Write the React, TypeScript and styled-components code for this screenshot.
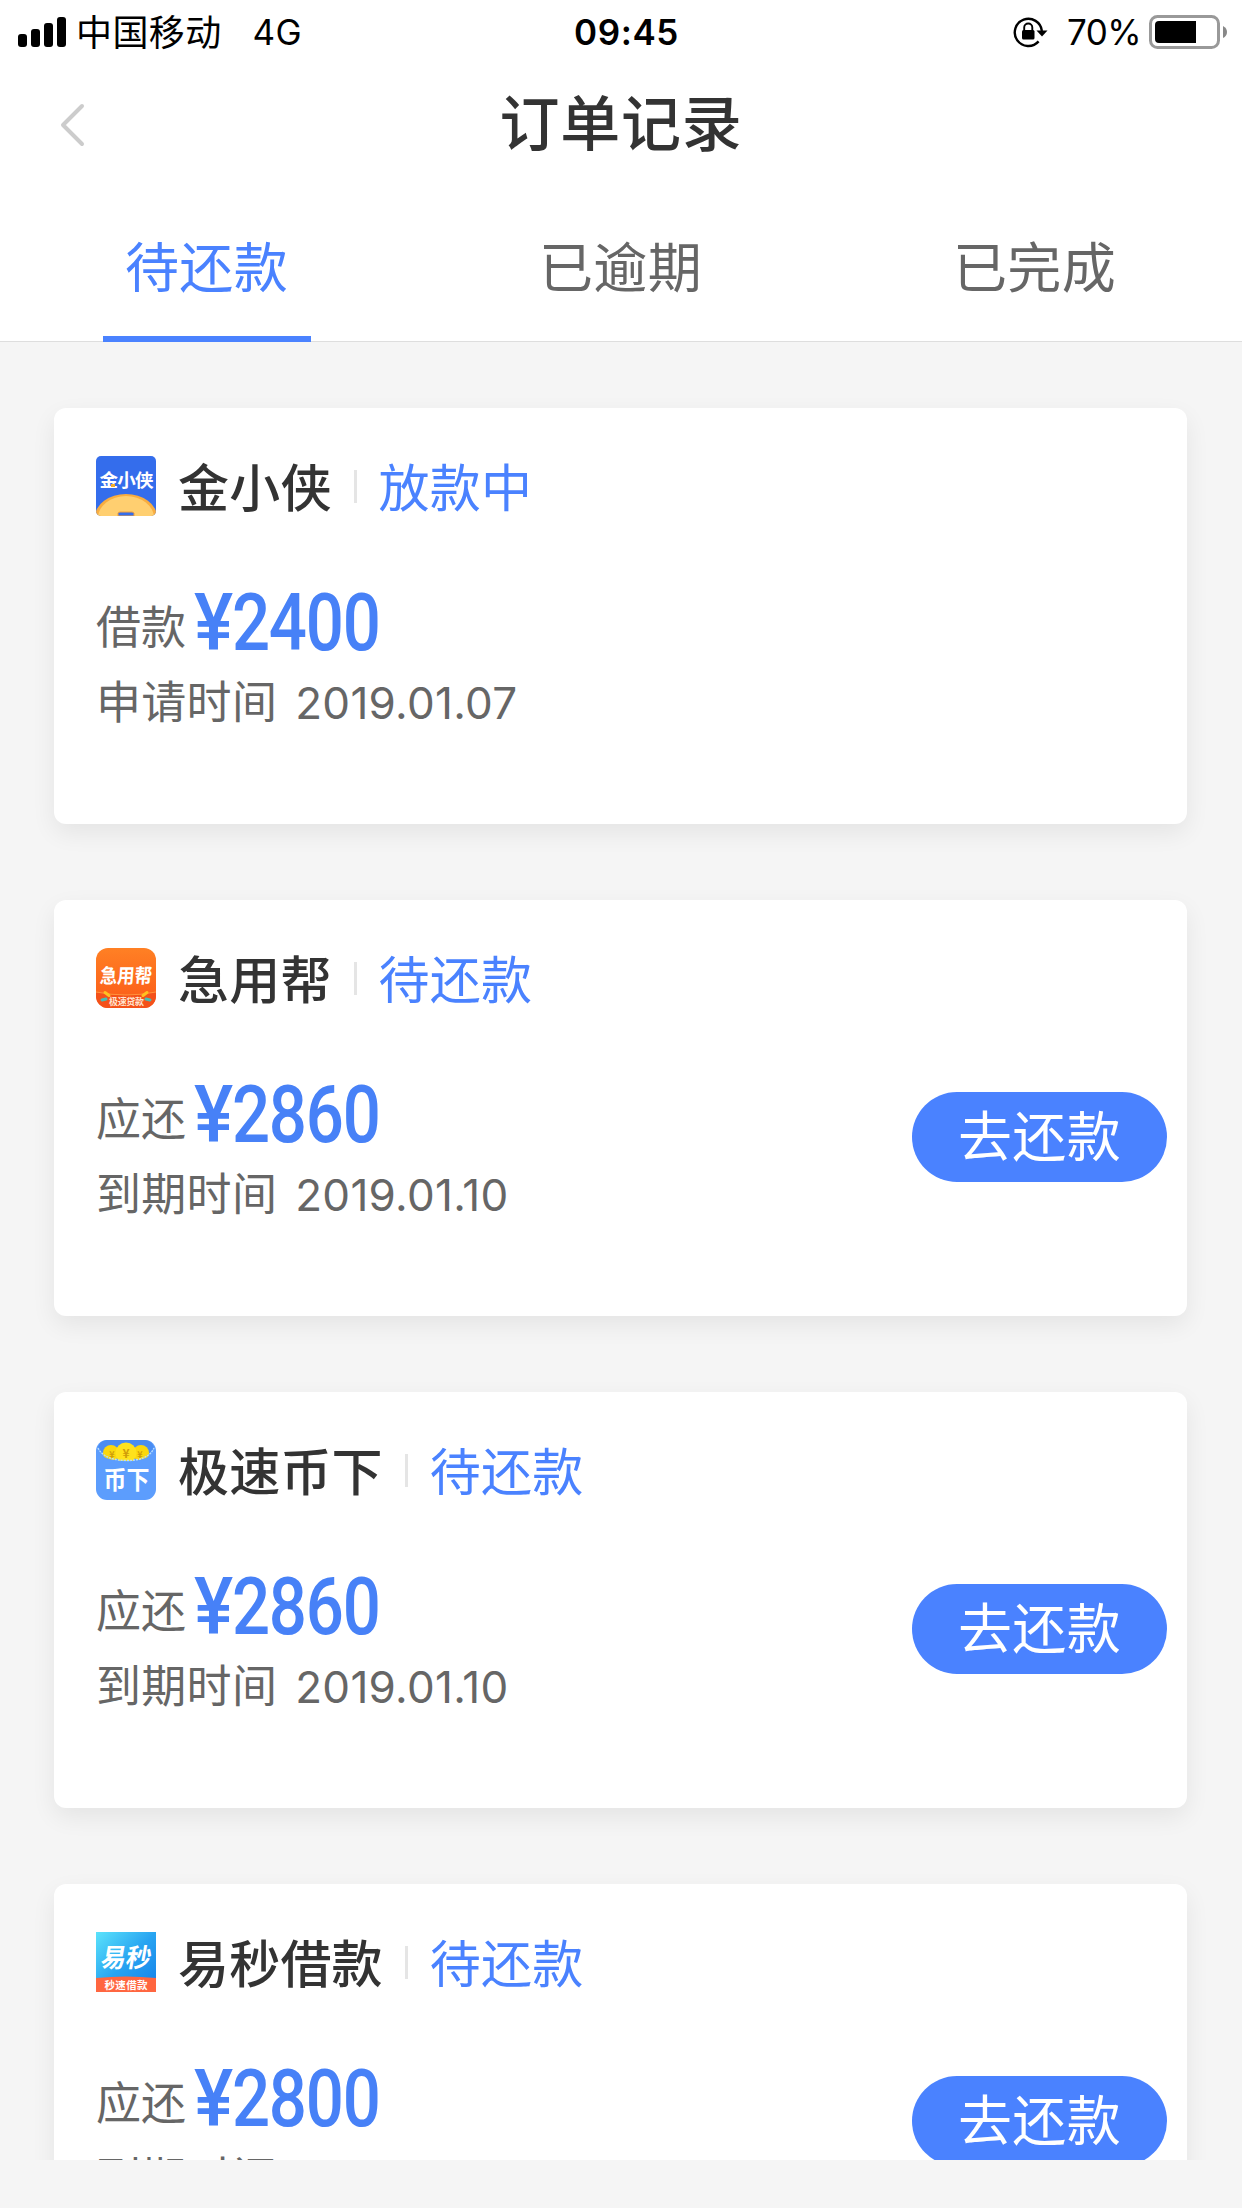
import React from 'react';
import styled, { createGlobalStyle } from 'styled-components';

const cjk = '"Noto Sans CJK SC", sans-serif';

const GlobalStyle = createGlobalStyle`
  * { box-sizing: border-box; }
  body { margin: 0; background: #f5f5f5; font-family: Inter, ${cjk}; }
`;

const Screen = styled.div`
  width: 1242px;
  height: 2208px;
  display: flex;
  flex-direction: column;
  background: #f5f5f5;
  overflow: hidden;
`;

const StatusBar = styled.header`
  height: 60px;
  flex: none;
  display: grid;
  grid-template-columns: 1fr auto 1fr;
  align-items: center;
  padding: 0 14px 0 18px;
  background: #fff;
  color: #000;
  font-size: 35px;
  line-height: 60px;
`;

const StatusLeft = styled.div`
  display: flex;
  align-items: center;
`;

const StatusRight = styled.div`
  display: flex;
  align-items: center;
  justify-content: flex-end;
`;

const Carrier = styled.span`
  margin-left: 10px;
  padding-bottom: 4px;
  font-family: ${cjk};
  font-size: 36px;
  letter-spacing: 0.4px;
`;

const Network = styled.span`
  margin-left: 31px;
  letter-spacing: 0.4px;
`;

const Clock = styled.time`
  padding-left: 7px;
  font-weight: 600;
  letter-spacing: 0.6px;
`;

const Percent = styled.span`
  margin: 0 8px 0 19px;
  letter-spacing: -0.6px;
`;

const NavBar = styled.nav`
  height: 132px;
  flex: none;
  display: grid;
  grid-template-columns: 150px 1fr 150px;
  align-items: start;
  background: #fff;
`;

const BackButton = styled.button`
  display: flex;
  align-items: center;
  height: 130px;
  padding: 0 0 0 58px;
  border: 0;
  background: none;
`;

const Title = styled.h1`
  margin: 0;
  color: #333;
  font: 500 60px/119px ${cjk};
  text-align: center;
  letter-spacing: 0.8px;
`;

const Tabs = styled.div`
  height: 150px;
  flex: none;
  display: flex;
  background: #fff;
  border-bottom: 1px solid #dedede;
`;

const Tab = styled.button<{ $active?: boolean }>`
  flex: 1;
  display: flex;
  flex-direction: column;
  align-items: center;
  justify-content: space-between;
  height: 150px;
  padding: 0;
  border: 0;
  background: none;
  color: ${(p) => (p.$active ? '#4a82ff' : '#666')};
  font: 400 54px/146px ${cjk};

  &::after {
    content: '';
    width: 208px;
    height: 6px;
    flex: none;
    background: ${(p) => (p.$active ? '#4a82ff' : 'transparent')};
  }
`;

const TabLabel = styled.span`
  height: 144px;
  padding-right: 1px;
  line-height: 145px;
  letter-spacing: 0.4px;
`;

const List = styled.main`
  height: 1818px;
  flex: none;
  display: flex;
  flex-direction: column;
  gap: 76px;
  padding: 66px 55px 0 54px;
  overflow: hidden;
`;

const Card = styled.article`
  height: 416px;
  flex: none;
  display: flex;
  flex-direction: column;
  padding: 48px 20px 0 42px;
  border-radius: 12px;
  background: #fff;
  box-shadow: 0 9px 24px rgba(0, 0, 0, 0.07);
`;

const CardHead = styled.div`
  height: 60px;
  display: flex;
  align-items: center;
`;

const Name = styled.h2`
  margin: 0 0 0 22px;
  padding-bottom: 3px;
  color: #333;
  font: 500 51px/56px ${cjk};
  letter-spacing: 0.2px;
`;

const Divider = styled.span`
  width: 3px;
  height: 33px;
  margin: 0 22px 0 22px;
  background: #e5e5e5;
`;

const State = styled.span`
  padding-bottom: 3px;
  color: #4a82ff;
  font: 400 51px/56px ${cjk};
  letter-spacing: 0.2px;
`;

const CardBody = styled.div`
  display: flex;
  justify-content: space-between;
  align-items: flex-start;
  padding-top: 66px;
`;

const Facts = styled.div`
  display: flex;
  flex-direction: column;
`;

const AmountRow = styled.div`
  display: flex;
  align-items: flex-start;
  height: 84px;
`;

const AmountLabel = styled.span`
  color: #666;
  font: 400 45px/86px ${cjk};
`;

const Amount = styled.strong`
  display: flex;
  margin-left: 8px;
  color: #4781f7;
  font: 500 79px/82px Roboto, sans-serif;
  letter-spacing: -1.4px;
  transform: scaleX(0.85);
  transform-origin: 0 50%;
`;

const Currency = styled.span`
  margin-right: 4px;
  transform: scaleX(1.1);
  transform-origin: 0 50%;
`;

const DateRow = styled.div`
  display: flex;
  align-items: baseline;
  height: 60px;
  margin-top: 4px;
  color: #666;
  font: 400 45px/59px ${cjk};
  letter-spacing: 0.3px;
`;

const DateValue = styled.time`
  margin-left: 18px;
  font-family: Inter, sans-serif;
  font-size: 44px;
  letter-spacing: 0.3px;
`;

const PayButton = styled.button`
  width: 255px;
  height: 90px;
  margin-top: 18px;
  padding: 0 0 6px;
  border: 0;
  border-radius: 45px;
  background: #4a82ff;
  color: #fff;
  font: 400 54px/84px ${cjk};
  letter-spacing: 0.4px;
`;

const Logo = styled.svg`
  width: 60px;
  height: 60px;
  flex: none;
  font-family: ${cjk};
  font-weight: 900;
`;

const SignalIcon = () => (
  <svg width="48" height="30" viewBox="0 0 48 30">
    <rect x="0" y="17" width="9" height="13" rx="3" />
    <rect x="13" y="12" width="9" height="18" rx="3" />
    <rect x="26" y="6" width="9" height="24" rx="3" />
    <rect x="39" y="0" width="9" height="30" rx="3" />
  </svg>
);

const LockIcon = () => (
  <svg width="35" height="32" viewBox="0 0 35 32" fill="none" stroke="#000">
    <path d="M25.6 25.4A13.6 13.6 0 1 1 28.9 15" strokeWidth="2.4" />
    <path d="M23.5 14.5H34.5L29 20.5Z" fill="#000" stroke="none" />
    <rect x="9" y="14" width="12.5" height="9.5" rx="1.5" fill="#000" stroke="none" />
    <path d="M11.2 15V11.5a4.05 4.05 0 0 1 8.1 0V15" strokeWidth="1.9" />
  </svg>
);

const BatteryIcon = () => (
  <svg width="79" height="34" viewBox="0 0 79 34">
    <rect x="1.5" y="1.5" width="68" height="31" rx="7" fill="none" stroke="#999" strokeWidth="3" />
    <path d="M10 6H47V28H10Q6 28 6 24V10Q6 6 10 6Z" />
    <path d="M74 11Q78 13 78 17T74 23Z" fill="#888" />
  </svg>
);

const ChevronIcon = () => (
  <svg width="28" height="44" viewBox="0 0 28 44" fill="none" stroke="#ccc" strokeWidth="4" strokeLinecap="round" strokeLinejoin="round">
    <path d="M24 3L5 22L24 41" />
  </svg>
);

const JinxiaoxiaLogo = () => (
  <Logo viewBox="0 0 60 60">
    <clipPath id="jxx"><rect width="60" height="60" rx="5" /></clipPath>
    <g clipPath="url(#jxx)">
      <rect width="60" height="60" fill="#346dec" />
      <ellipse cx="30" cy="61" rx="31" ry="23" fill="#f9ad3f" />
      <ellipse cx="30" cy="62" rx="28" ry="22" fill="#ffcf70" />
      <path d="M22 60V57.5Q22 56 24 56H36Q38 56 38 57.5V60Z" fill="#346dec" stroke="#f3a13a" strokeWidth="1" />
      <text x="30.5" y="31" fontSize="18.5" fill="#fff" textAnchor="middle" textLength="54" fontWeight="700">金小侠</text>
      <rect x="15" y="28" width="4" height="3" fill="#f5ad28" />
    </g>
  </Logo>
);

const JiyongbangLogo = () => (
  <Logo viewBox="0 0 60 60">
    <defs>
      <linearGradient id="jyb" x1="0" y1="0" x2="0" y2="1">
        <stop offset="0" stopColor="#ff8024" />
        <stop offset="1" stopColor="#fb5a18" />
      </linearGradient>
      <clipPath id="jybClip"><rect width="60" height="60" rx="12" /></clipPath>
    </defs>
    <g clipPath="url(#jybClip)">
      <rect width="60" height="60" fill="url(#jyb)" />
      <path d="M0 44Q30 50 60 44V60H0Z" fill="#f4511a" />
      <path d="M0 44Q30 50 60 44" fill="none" stroke="#ff943d" />
      <path d="M9 44.5l4 3M51 44.5l-4 3" stroke="#ffc021" strokeWidth="3" strokeLinecap="round" />
      <path d="M6 52l4-1M50 51l4 1" stroke="#49bdb5" strokeWidth="3" strokeLinecap="round" />
      <text x="29" y="35.5" fontSize="20" fill="#fff" textAnchor="middle" textLength="52" lengthAdjust="spacingAndGlyphs" fontWeight="700" transform="skewX(-4) translate(3 0)">急用帮</text>
      <text x="30.5" y="56.5" fontSize="9" fill="#ffe3cf" textAnchor="middle" textLength="35" fontWeight="700">极速贷款</text>
    </g>
  </Logo>
);

const BixiaLogo = () => (
  <Logo viewBox="0 0 60 60">
    <rect width="60" height="60" rx="11" fill="#5c9dfd" />
    <path d="M2 7Q4 1 11 0H49Q56 1 58 7Q54 15 46 18Q30 22 14 18Q6 15 2 7Z" fill="#4a8cf2" />
    <circle cx="15" cy="13" r="8" fill="#fbd80e" />
    <circle cx="45" cy="13" r="8" fill="#fbd80e" />
    <circle cx="30" cy="13" r="10.5" fill="#ffe21c" />
    <path d="M5 15Q13 21 30 21T55 15V26H5Z" fill="#5c9dfd" />
    <path d="M2 8Q8 20 30 20.5T58 8" fill="none" stroke="#b5dcff" strokeWidth="1.4" strokeDasharray="2 1" />
    <g fill="#cf9c09" textAnchor="middle" fontWeight="700">
      <text x="16" y="18" fontSize="9">¥</text>
      <text x="30" y="18" fontSize="12">¥</text>
      <text x="44" y="18" fontSize="9">¥</text>
    </g>
    <text x="30.5" y="49" fontSize="25" fill="#fff" textAnchor="middle" textLength="46" lengthAdjust="spacingAndGlyphs" fontWeight="700">币下</text>
  </Logo>
);

const YimiaoLogo = () => (
  <Logo viewBox="0 0 60 60">
    <defs>
      <linearGradient id="ym" x1="0" y1="0" x2="1" y2="1">
        <stop offset="0" stopColor="#5be3fb" />
        <stop offset="0.5" stopColor="#28a4f1" />
        <stop offset="1" stopColor="#137ee8" />
      </linearGradient>
    </defs>
    <rect width="60" height="60" fill="url(#ym)" />
    <path d="M0 46Q30 43 60 46V60H0Z" fill="#ff6640" />
    <text x="35" y="35.5" fontSize="26" fill="#fff" textAnchor="middle" textLength="50" lengthAdjust="spacingAndGlyphs" fontWeight="700" transform="skewX(-10)">易秒</text>
    <text x="30" y="56.5" fontSize="10.5" fill="#fff" textAnchor="middle" textLength="43" fontWeight="700">秒速借款</text>
  </Logo>
);

interface Order {
  logo: React.ComponentType;
  name: string;
  state: string;
  amountLabel: string;
  amount: string;
  dateLabel: string;
  date: string;
  payable: boolean;
}

const orders: Order[] = [
  { logo: JinxiaoxiaLogo, name: '金小侠', state: '放款中', amountLabel: '借款', amount: '2400', dateLabel: '申请时间', date: '2019.01.07', payable: false },
  { logo: JiyongbangLogo, name: '急用帮', state: '待还款', amountLabel: '应还', amount: '2860', dateLabel: '到期时间', date: '2019.01.10', payable: true },
  { logo: BixiaLogo, name: '极速币下', state: '待还款', amountLabel: '应还', amount: '2860', dateLabel: '到期时间', date: '2019.01.10', payable: true },
  { logo: YimiaoLogo, name: '易秒借款', state: '待还款', amountLabel: '应还', amount: '2800', dateLabel: '到期时间', date: '2019.01.10', payable: true },
];

const OrderCard = ({ order }: { order: Order }) => {
  const OrderLogo = order.logo;
  return (
    <Card>
      <CardHead>
        <OrderLogo />
        <Name>{order.name}</Name>
        <Divider />
        <State>{order.state}</State>
      </CardHead>
      <CardBody>
        <Facts>
          <AmountRow>
            <AmountLabel>{order.amountLabel}</AmountLabel>
            <Amount>
              <Currency>¥</Currency>
              {order.amount}
            </Amount>
          </AmountRow>
          <DateRow>
            {order.dateLabel}
            <DateValue>{order.date}</DateValue>
          </DateRow>
        </Facts>
        {order.payable && <PayButton>去还款</PayButton>}
      </CardBody>
    </Card>
  );
};

export default function App() {
  return (
    <Screen>
      <GlobalStyle />
      <StatusBar>
        <StatusLeft>
          <SignalIcon />
          <Carrier>中国移动</Carrier>
          <Network>4G</Network>
        </StatusLeft>
        <Clock>09:45</Clock>
        <StatusRight>
          <LockIcon />
          <Percent>70%</Percent>
          <BatteryIcon />
        </StatusRight>
      </StatusBar>
      <NavBar>
        <BackButton aria-label="返回">
          <ChevronIcon />
        </BackButton>
        <Title>订单记录</Title>
      </NavBar>
      <Tabs>
        <Tab $active><TabLabel>待还款</TabLabel></Tab>
        <Tab><TabLabel>已逾期</TabLabel></Tab>
        <Tab><TabLabel>已完成</TabLabel></Tab>
      </Tabs>
      <List>
        {orders.map((order) => (
          <OrderCard key={order.name} order={order} />
        ))}
      </List>
    </Screen>
  );
}
